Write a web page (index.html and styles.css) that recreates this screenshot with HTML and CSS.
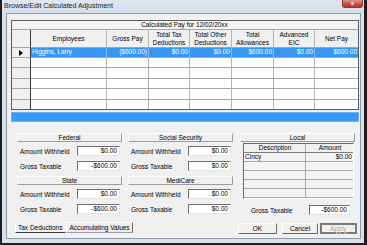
FILE: index.html
```html
<!DOCTYPE html>
<html lang="en">
<head>
  <meta charset="UTF-8">
  <title>Browse/Edit Calculated Adjustment</title>
  <link rel="stylesheet" href="styles.css">
</head>
<body>
  <div class="window">
    <div class="titlebar">
      <span class="title">Browse/Edit Calculated Adjustment</span>
      <span class="close">x</span>
    </div>

    <div class="client">
      <div class="grid">
        <div class="cell caption">Calculated Pay for 12/02/20xx</div>

        <div class="cell rowhead"></div>
        <div class="cell head">Employees</div>
        <div class="cell head">Gross Pay</div>
        <div class="cell head">Total Tax<br>Deductions</div>
        <div class="cell head">Total Other<br>Deductions</div>
        <div class="cell head">Total<br>Allowances</div>
        <div class="cell head">Advanced<br>EIC</div>
        <div class="cell head">Net Pay</div>

        <div class="cell rowhead"><span class="pointer"></span></div>
        <div class="cell sel text">Higgins, Larry</div>
        <div class="cell sel">($600.00)</div>
        <div class="cell sel">$0.00</div>
        <div class="cell sel">$0.00</div>
        <div class="cell sel">$600.00</div>
        <div class="cell sel">$0.00</div>
        <div class="cell sel">$600.00</div>

        <div class="cell rowhead"></div>
        <div class="cell"></div><div class="cell"></div><div class="cell"></div><div class="cell"></div>
        <div class="cell"></div><div class="cell"></div><div class="cell"></div>

        <div class="cell rowhead"></div>
        <div class="cell"></div><div class="cell"></div><div class="cell"></div><div class="cell"></div>
        <div class="cell"></div><div class="cell"></div><div class="cell"></div>

        <div class="cell rowhead"></div>
        <div class="cell"></div><div class="cell"></div><div class="cell"></div><div class="cell"></div>
        <div class="cell"></div><div class="cell"></div><div class="cell"></div>

        <div class="cell rowhead"></div>
        <div class="cell"></div><div class="cell"></div><div class="cell"></div><div class="cell"></div>
        <div class="cell"></div><div class="cell"></div><div class="cell"></div>

        <div class="cell rowhead"></div>
        <div class="cell"></div><div class="cell"></div><div class="cell"></div><div class="cell"></div>
        <div class="cell"></div><div class="cell"></div><div class="cell"></div>
      </div>

      <div class="summary-bar"></div>

      <div class="panels">
        <div class="col">
          <div class="group-head">Federal</div>
          <div class="field"><span>Amount Withheld</span><span class="input">$0.00</span></div>
          <div class="field"><span>Gross Taxable</span><span class="input">-$600.00</span></div>
          <div class="group-head">State</div>
          <div class="field"><span>Amount Withheld</span><span class="input">$0.00</span></div>
          <div class="field"><span>Gross Taxable</span><span class="input">-$600.00</span></div>
        </div>

        <div class="col">
          <div class="group-head">Social Security</div>
          <div class="field"><span>Amount Withheld</span><span class="input">$0.00</span></div>
          <div class="field"><span>Gross Taxable</span><span class="input">$0.00</span></div>
          <div class="group-head">MediCare</div>
          <div class="field"><span>Amount Withheld</span><span class="input">$0.00</span></div>
          <div class="field"><span>Gross Taxable</span><span class="input">$0.00</span></div>
        </div>

        <div class="col local">
          <div class="group-head">Local</div>
          <div class="local-table">
            <div class="lcell lhead">Description</div>
            <div class="lcell lhead">Amount</div>
            <div class="lcell">Cincy</div>
            <div class="lcell num">$0.00</div>
            <div class="lcell"></div><div class="lcell"></div>
            <div class="lcell"></div><div class="lcell"></div>
            <div class="lcell"></div><div class="lcell"></div>
            <div class="lcell"></div><div class="lcell"></div>
          </div>
          <div class="field"><span>Gross Taxable</span><span class="input">-$600.00</span></div>
        </div>
      </div>

      <div class="footer">
        <div class="tabs">
          <span class="tab active">Tax Deductions</span>
          <span class="tab">Accumulating Values</span>
        </div>
        <div class="buttons">
          <span class="btn ok">OK</span>
          <span class="btn cancel">Cancel</span>
          <span class="btn apply">Apply</span>
        </div>
      </div>
    </div>
  </div>
</body>
</html>
```

FILE: styles.css
```css
* {
  margin: 0;
  padding: 0;
  box-sizing: border-box;
}

body {
  font-family: "Liberation Sans", Arial, sans-serif;
  font-size: 6.5px;
  color: #000;
  background: #1e1e1e;
}

.window {
  width: 367px;
  height: 245px;
  display: flex;
  flex-direction: column;
  background: #d8e2ec;
  border-left: 2px solid #1e1e1e;
  border-right: 3px solid #1e1e1e;
  border-bottom: 2px solid #1e1e1e;
}

.titlebar {
  height: 13px;
  display: flex;
  justify-content: space-between;
  align-items: flex-start;
  padding: 0 0 0 2px;
  background: linear-gradient(#dfe8f1, #d3dee9);
}

.title {
  font-size: 7px;
  line-height: 12px;
  color: #1a1a1a;
}

.close {
  width: 21px;
  height: 8px;
  margin-right: 1px;
  background: linear-gradient(#e39a8c, #c4483a 60%, #b93c30);
  border: 1px solid #8c3a32;
  border-top: none;
  border-radius: 0 0 3px 3px;
  color: #fff;
  font-weight: bold;
  font-size: 6px;
  line-height: 6px;
  text-align: center;
}

.client {
  flex: 1;
  margin: 0 3px 4px 4px;
  padding: 6px 1px 0 4px;
  background: #f0f0f0;
  border: 1px solid #8c9aa9;
  overflow: hidden;
}

/* main grid */
.grid {
  display: grid;
  grid-template-columns: 19px 76px 42px 41px 42px 42px 41px 43px;
  grid-template-rows: 9px 18px 10px 10px 11px 10px 11px 9px;
  width: 348px;
  border: 1px solid #5c5c5c;
  background: #fff;
}

.cell {
  border-right: 1px solid #b4b4b4;
  border-bottom: 1px solid #a4a4a4;
  text-align: right;
  padding-right: 1px;
  line-height: 8px;
  white-space: nowrap;
  overflow: hidden;
}

.cell:nth-child(8n+9) {
  border-right: none;
}

.cell:nth-last-child(-n+8) {
  border-bottom: none;
}

.caption {
  grid-column: 1 / -1;
  background: #f4f4f4;
  text-align: center;
  line-height: 8px;
  border-right: none;
}

.head {
  background: #f0f0f0;
  display: flex;
  align-items: center;
  justify-content: center;
  text-align: center;
  line-height: 7.5px;
  padding: 0;
}

.rowhead {
  background: #f0f0f0;
  border-right: 1px solid #3a3a3a;
  display: flex;
  align-items: center;
  justify-content: center;
  padding: 0;
}

.pointer {
  width: 0;
  height: 0;
  border-top: 3px solid transparent;
  border-bottom: 3px solid transparent;
  border-left: 4px solid #000;
}

.sel {
  background: #3596f4;
  color: #fff;
  border-right-color: #86bdf5;
  border-bottom-color: #7db2e8;
}

.sel.text {
  text-align: left;
  padding-left: 1px;
}

.summary-bar {
  width: 348px;
  height: 10px;
  margin-top: 2px;
  background: #3898f7;
  border: 1px solid #6cb2fb;
}

/* tax panels */
.panels {
  display: flex;
  margin-top: 11px;
  padding-left: 6px;
  gap: 6px;
}

.col {
  width: 105px;
  display: flex;
  flex-direction: column;
}

.col.local {
  width: 115px;
  margin-left: 1px;
}

.group-head {
  height: 9px;
  line-height: 7px;
  text-align: center;
  background: #f0f0f0;
  border: 1px solid;
  border-color: #fff #9c9c9c #9c9c9c #fff;
  margin-bottom: 4px;
}

.field + .group-head {
  margin-top: 5px;
}

.field {
  height: 10px;
  display: flex;
  align-items: center;
  justify-content: space-between;
  padding-left: 3px;
}

.field + .field {
  margin-top: 5px;
}

.input {
  width: 43px;
  height: 10px;
  margin-right: 2px;
  background: #fff;
  border: 1px solid;
  border-color: #6e6e6e #e4e4e4 #e4e4e4 #6e6e6e;
  text-align: right;
  padding-right: 2px;
  line-height: 8px;
}

.local .group-head {
  margin-bottom: 1px;
}

.local-table {
  display: grid;
  grid-template-columns: 62px 47px;
  grid-template-rows: repeat(6, 9px);
  width: 111px;
  margin-left: 3px;
  border: 1px solid;
  border-color: #6a6a6a #fff #fff #6a6a6a;
  background: #f4f4f4;
}

.lcell {
  border-right: 1px solid #a8a8a8;
  border-bottom: 1px solid #a8a8a8;
  line-height: 8px;
  padding-left: 1px;
}

.lcell:nth-child(2n) {
  border-right: none;
}

.lhead {
  text-align: center;
  background: #f0f0f0;
  border-bottom-color: #7a7a7a;
}

.lcell.num {
  text-align: right;
  padding-right: 1px;
}

.local .field {
  margin-top: 6px;
  padding-left: 11px;
}

.local .input {
  width: 41px;
  margin-right: 5px;
}

/* tabs and buttons */
.footer {
  display: flex;
  justify-content: space-between;
  align-items: flex-start;
  margin-top: 7px;
}

.tabs {
  display: flex;
  margin-left: 4px;
}

.tab {
  height: 11px;
  line-height: 9px;
  white-space: nowrap;
  border: 1px solid;
  border-color: #fff #6a6a6a #a0a0a0 #fff;
  background: #ececec;
}

.tab.active {
  width: 51px;
  background: #f0f0f0;
  border-color: transparent transparent #3a3a3a #fff;
  padding-left: 2px;
}

.tab:not(.active) {
  width: 67px;
  text-align: center;
}

.buttons {
  display: flex;
  margin-top: 1px;
  margin-right: 2px;
}

.btn {
  height: 11px;
  line-height: 9px;
  text-align: center;
  background: #f0f0f0;
  border: 1px solid;
  border-color: #fff #6a6a6a #6a6a6a #fff;
}

.ok {
  width: 39px;
}

.cancel {
  width: 36px;
  margin-left: 5px;
}

.apply {
  width: 37px;
  margin-left: 2px;
  border: 2px solid #7a7a7a;
  line-height: 7px;
  color: #a6a6a6;
  text-shadow: 1px 1px 0 #fff;
}
```
